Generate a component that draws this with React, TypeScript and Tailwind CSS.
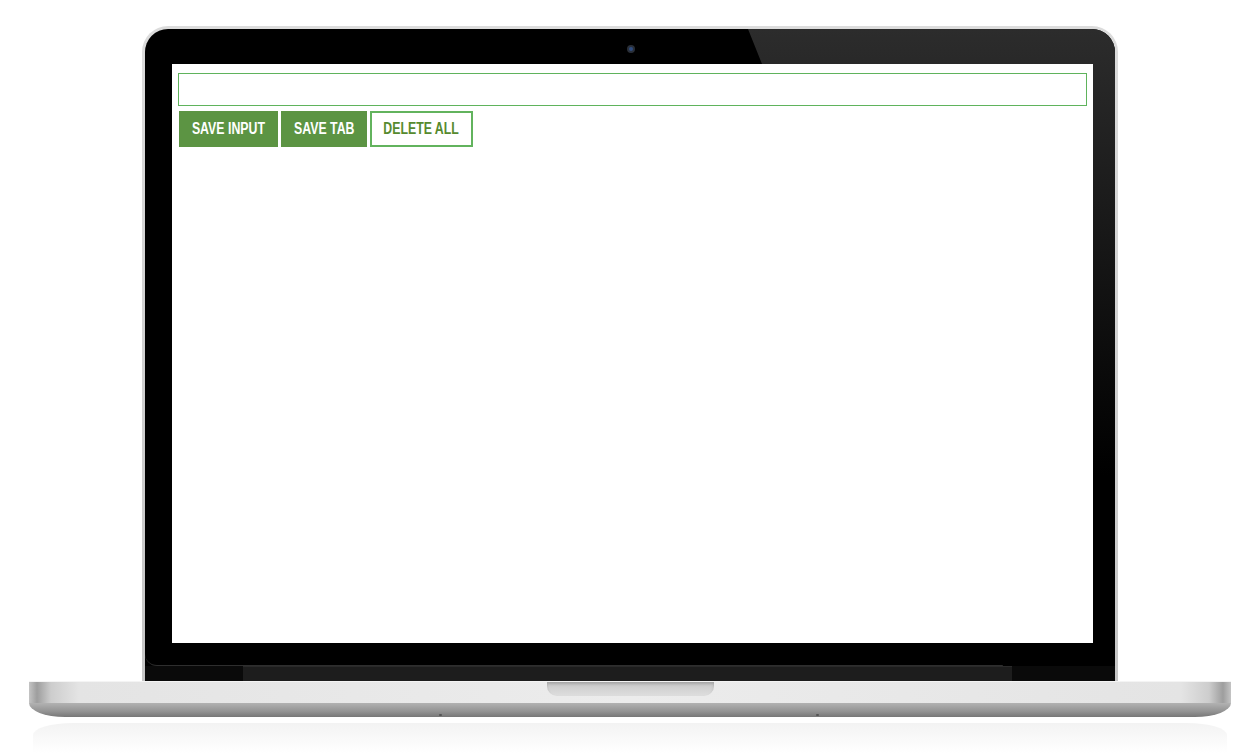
import React from "react";

function Screen() {
  return (
    <div className="relative h-[579px] w-[921px] bg-white px-[6px] pt-[9px] font-['Liberation_Sans',Arial,sans-serif]">
      <input readOnly className="block h-[33px] w-full border border-[#5fb35c] bg-white outline-none" />
      <div className="ml-[1px] mt-[5px] flex gap-[3px]">
        <button className="flex h-[36px] w-[99px] items-center justify-center bg-[#5c9443] text-[16px] font-bold text-white">
          <span className="inline-block scale-x-[0.77] whitespace-nowrap">SAVE INPUT</span>
        </button>
        <button className="flex h-[36px] w-[86px] items-center justify-center bg-[#5c9443] text-[16px] font-bold text-white">
          <span className="inline-block scale-x-[0.77] whitespace-nowrap">SAVE TAB</span>
        </button>
        <button className="flex h-[36px] w-[103px] items-center justify-center border-2 border-[#62b35d] bg-white text-[16px] font-bold text-[#568a2e]">
          <span className="inline-block scale-x-[0.77] whitespace-nowrap">DELETE ALL</span>
        </button>
      </div>
    </div>
  );
}

export default function App() {
  return (
    <div className="flex h-[756px] w-[1260px] flex-col overflow-hidden bg-white">
      {/* lid */}
      <div className="ml-[142px] mt-[26px] h-[655px] w-[976px] rounded-t-[26px] bg-[linear-gradient(to_bottom,#dcdcdc,#c6c6c6)] px-[3px] pt-[3px]">
        <div className="flex h-full flex-col overflow-hidden rounded-t-[23px] bg-black">
          <div className="relative h-[637px] rounded-b-[12px] border-b border-[#2e2e2e] pl-[27px] pt-[35px]">
            <svg className="absolute inset-0" width="970" height="637">
              <defs>
                <linearGradient id="glare" x1="0" y1="0" x2="0" y2="1">
                  <stop offset="0" stopColor="#2c2c2c" />
                  <stop offset="0.7" stopColor="#000" />
                </linearGradient>
              </defs>
              <polygon points="603,0 970,0 970,637 858,637" fill="url(#glare)" />
            </svg>
            <div className="absolute left-[482px] top-[16px] flex h-[8px] w-[8px] items-center justify-center rounded-full bg-[#2a2f38]">
              <div className="h-[4px] w-[4px] rounded-full bg-[#2f4c80]" />
            </div>
            <Screen />
          </div>
          <div className="flex h-[15px]">
            <div className="w-[98px] bg-[#0a0a0a]" />
            <div className="flex-1 border-t border-[#2a2a2a] bg-[#1d1d1d]" />
            <div className="w-[103px] bg-[#0a0a0a]" />
          </div>
        </div>
      </div>
      {/* base */}
      <div className="ml-[29px] w-[1202px]">
        <div className="flex h-[22px] justify-center border-t border-[#f4f4f4] bg-[linear-gradient(to_right,#c4c4c4_0px,#9e9e9e_8px,#cdcdcd_22px,#e4e4e4_50px,#ececec_600px,#e4e4e4_1152px,#cdcdcd_1180px,#9e9e9e_1194px,#c4c4c4_1202px)]">
          <div className="h-[14px] w-[167px] rounded-b-[10px] bg-[linear-gradient(to_bottom,#c8c8c8,#dedede)] shadow-[inset_0_2px_3px_rgba(0,0,0,0.18)]" />
        </div>
        <div className="flex h-[14px] items-end rounded-b-[36px_14px] bg-[linear-gradient(to_bottom,#b2b2b2,#939393_60%,#777777)]">
          <span className="mb-[1px] ml-[410px] h-[2px] w-[3px] rounded-full bg-[#555]" />
          <span className="mb-[1px] ml-[374px] h-[2px] w-[3px] rounded-full bg-[#555]" />
        </div>
        <div className="mx-[4px] mt-[6px] h-[30px] rounded-t-[40px_12px] bg-[linear-gradient(to_bottom,#f3f3f3,#ffffff)]" />
      </div>
    </div>
  );
}
